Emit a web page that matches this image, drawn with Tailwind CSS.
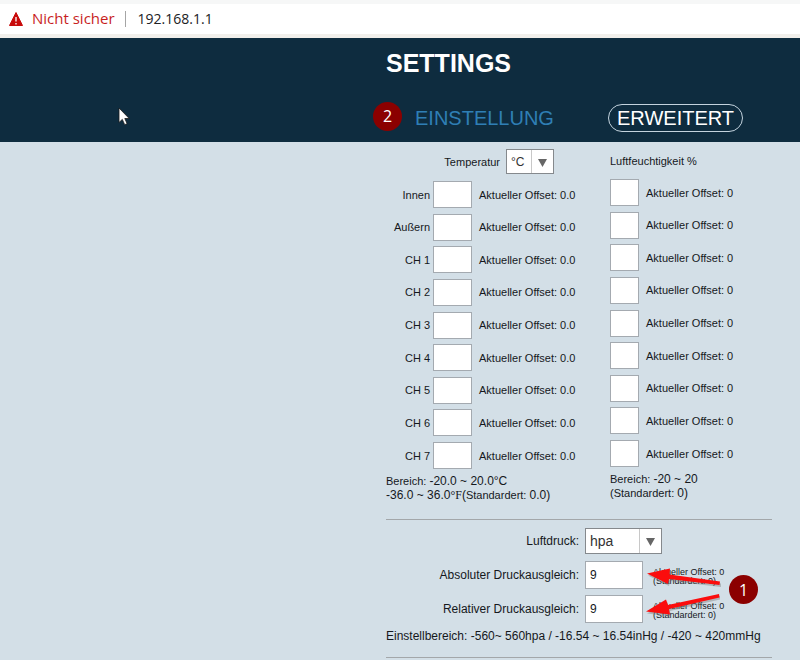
<!DOCTYPE html>
<html lang="de">
<head>
<meta charset="utf-8">
<meta name="viewport" content="width=device-width, initial-scale=1">
<title>Settings</title>
<script src="https://cdn.jsdelivr.net/npm/@tailwindcss/browser@4"></script>
</head>
<body class="relative min-h-screen overflow-x-hidden bg-[#d3dfe7] font-['Liberation_Sans',Arial,sans-serif] text-[11px] leading-[14px] text-[#15181c]">

<div class="flex h-[38px] items-center border-t-4 border-b-4 border-t-[#f6f7f7] border-b-[#f1efeb] bg-white pl-2 font-['Open_Sans','Noto_Sans',sans-serif] text-sm">
  <svg class="size-4" viewBox="0 0 16 16" aria-hidden="true"><path d="M8 1.500 14.500 14.500H1.500Z" fill="#c80a0a" stroke="#c80a0a" stroke-linejoin="round"/><path d="M8 6v4.500M8 12v1.500" stroke="#fff" stroke-width="1.3"/></svg>
  <span class="ml-2 text-[15px] text-[#c81e1e]">Nicht sicher</span>
  <span class="mr-3 ml-2.5 h-4 w-px bg-[#a5a5a5]"></span>
  <span class="text-[#202124]">192.168.1.1</span>
</div>

<header class="h-[104px] bg-[#0e2c3f] pt-2 pl-[386px]">
  <h1 class="text-[25px] leading-[34px] font-bold text-white">SETTINGS</h1>
  <nav class="relative mt-6 flex items-center text-xl leading-7">
    <span class="absolute -left-[13px] flex size-[29px] -translate-y-0.5 items-center justify-center rounded-full bg-[#8b0000] font-['Open_Sans',sans-serif] text-base text-white">2</span>
    <a href="#einstellung" class="ml-[29px] w-[193px] text-[#2f7fb5]">EINSTELLUNG</a>
    <a href="#erweitert" class="flex h-7 items-center rounded-full border border-[#c3d3de] px-2 text-white">ERWEITERT</a>
  </nav>
</header>

<main class="pr-7 pl-[386px]">
  <div class="flex">
    <section class="w-56 pt-[7px]">
      <div class="flex h-[25px] items-center">
        <label for="temp" class="w-[114px] text-right">Temperatur</label>
        <div class="relative ml-1.5 h-[25px] w-12">
          <select id="temp" class="block size-full appearance-none border border-[#85898d] bg-white pl-1 text-xs text-[#333]"><option>°C</option><option>°F</option></select>
          <span class="pointer-events-none absolute inset-y-px right-px flex w-[22px] items-center justify-center border-l border-[#c8c8c8] pt-0.5"><svg class="h-2 w-[9px]" viewBox="0 0 9 8"><path d="M0 0h9L4.500 8Z" fill="#666"/></svg></span>
        </div>
      </div>
      <div class="mt-[7px] flex h-[288px] flex-col justify-between">
        <div class="flex items-center"><label for="t1" class="w-11 text-right">Innen</label><input id="t1" class="mx-[3px] h-[27px] w-[39px] border border-[#a4aab0] bg-white px-1"><span class="ml-1">Aktueller Offset: 0.0</span></div>
        <div class="flex items-center"><label for="t2" class="w-11 text-right">Außern</label><input id="t2" class="mx-[3px] h-[27px] w-[39px] border border-[#a4aab0] bg-white px-1"><span class="ml-1">Aktueller Offset: 0.0</span></div>
        <div class="flex items-center"><label for="t3" class="w-11 text-right">CH 1</label><input id="t3" class="mx-[3px] h-[27px] w-[39px] border border-[#a4aab0] bg-white px-1"><span class="ml-1">Aktueller Offset: 0.0</span></div>
        <div class="flex items-center"><label for="t4" class="w-11 text-right">CH 2</label><input id="t4" class="mx-[3px] h-[27px] w-[39px] border border-[#a4aab0] bg-white px-1"><span class="ml-1">Aktueller Offset: 0.0</span></div>
        <div class="flex items-center"><label for="t5" class="w-11 text-right">CH 3</label><input id="t5" class="mx-[3px] h-[27px] w-[39px] border border-[#a4aab0] bg-white px-1"><span class="ml-1">Aktueller Offset: 0.0</span></div>
        <div class="flex items-center"><label for="t6" class="w-11 text-right">CH 4</label><input id="t6" class="mx-[3px] h-[27px] w-[39px] border border-[#a4aab0] bg-white px-1"><span class="ml-1">Aktueller Offset: 0.0</span></div>
        <div class="flex items-center"><label for="t7" class="w-11 text-right">CH 5</label><input id="t7" class="mx-[3px] h-[27px] w-[39px] border border-[#a4aab0] bg-white px-1"><span class="ml-1">Aktueller Offset: 0.0</span></div>
        <div class="flex items-center"><label for="t8" class="w-11 text-right">CH 6</label><input id="t8" class="mx-[3px] h-[27px] w-[39px] border border-[#a4aab0] bg-white px-1"><span class="ml-1">Aktueller Offset: 0.0</span></div>
        <div class="flex items-center"><label for="t9" class="w-11 text-right">CH 7</label><input id="t9" class="mx-[3px] h-[27px] w-[39px] border border-[#a4aab0] bg-white px-1"><span class="ml-1">Aktueller Offset: 0.0</span></div>
      </div>
      <p class="mt-[5px] whitespace-nowrap">Bereich: <span class="text-xs leading-[14px]">-20.0 ~ 20.0°C</span><br><span class="text-xs leading-[14px]">-36.0 ~ 36.0<span class="font-['Liberation_Serif',serif]">°F</span>(</span>Standardert: <span class="text-xs leading-[14px]">0.0)</span></p>
    </section>

    <section class="pt-1.5">
      <h2 class="leading-[26px]">Luftfeuchtigkeit %</h2>
      <div class="mt-[5px] flex h-[288px] flex-col justify-between">
        <div class="flex items-center gap-[7px]"><input id="h1" class="h-[27px] w-[29px] border border-[#a4aab0] bg-white px-1"><label for="h1">Aktueller Offset: 0</label></div>
        <div class="flex items-center gap-[7px]"><input id="h2" class="h-[27px] w-[29px] border border-[#a4aab0] bg-white px-1"><label for="h2">Aktueller Offset: 0</label></div>
        <div class="flex items-center gap-[7px]"><input id="h3" class="h-[27px] w-[29px] border border-[#a4aab0] bg-white px-1"><label for="h3">Aktueller Offset: 0</label></div>
        <div class="flex items-center gap-[7px]"><input id="h4" class="h-[27px] w-[29px] border border-[#a4aab0] bg-white px-1"><label for="h4">Aktueller Offset: 0</label></div>
        <div class="flex items-center gap-[7px]"><input id="h5" class="h-[27px] w-[29px] border border-[#a4aab0] bg-white px-1"><label for="h5">Aktueller Offset: 0</label></div>
        <div class="flex items-center gap-[7px]"><input id="h6" class="h-[27px] w-[29px] border border-[#a4aab0] bg-white px-1"><label for="h6">Aktueller Offset: 0</label></div>
        <div class="flex items-center gap-[7px]"><input id="h7" class="h-[27px] w-[29px] border border-[#a4aab0] bg-white px-1"><label for="h7">Aktueller Offset: 0</label></div>
        <div class="flex items-center gap-[7px]"><input id="h8" class="h-[27px] w-[29px] border border-[#a4aab0] bg-white px-1"><label for="h8">Aktueller Offset: 0</label></div>
        <div class="flex items-center gap-[7px]"><input id="h9" class="h-[27px] w-[29px] border border-[#a4aab0] bg-white px-1"><label for="h9">Aktueller Offset: 0</label></div>
      </div>
      <p class="mt-[5px]">Bereich: <span class="text-xs leading-[14px]">-20 ~ 20</span><br>(Standardert: <span class="text-xs leading-[14px]">0)</span></p>
    </section>
  </div>

  <section class="relative mt-[17px] border-y border-[#a3a7aa] pt-2 pb-[13px] text-xs">
    <div class="flex items-center">
      <label for="unit" class="w-[193px] text-right">Luftdruck:</label>
      <div class="relative ml-1.5 h-[26px] w-[77px]">
        <select id="unit" class="block size-full appearance-none border border-[#85898d] bg-white pl-1 text-sm text-[#333]"><option>hpa</option><option>inHg</option><option>mmHg</option></select>
        <span class="pointer-events-none absolute inset-y-px right-px flex w-[22px] items-center justify-center border-l border-[#c8c8c8] pt-0.5"><svg class="h-2 w-[9px]" viewBox="0 0 9 8"><path d="M0 0h9L4.500 8Z" fill="#666"/></svg></span>
      </div>
    </div>
    <div class="mt-[7px] flex items-center">
      <label for="abs" class="w-[193px] text-right">Absoluter Druckausgleich:</label>
      <input id="abs" value="9" class="ml-1.5 h-7 w-[58px] border border-[#a4aab0] bg-white px-1">
      <p class="ml-2.5 pt-1 text-[9px] leading-[9px]">Aktueller Offset: 0<br>(Standardert: 0)</p>
    </div>
    <div class="mt-1.5 flex items-center">
      <label for="rel" class="w-[193px] text-right">Relativer Druckausgleich:</label>
      <input id="rel" value="9" class="ml-1.5 h-7 w-[58px] border border-[#a4aab0] bg-white px-1">
      <p class="ml-2.5 pt-1 text-[9px] leading-[9px]">Aktueller Offset: 0<br>(Standardert: 0)</p>
    </div>
    <p class="mt-[5px] leading-4">Einstellbereich: -560~ 560hpa / -16.54 ~ 16.54inHg / -420 ~ 420mmHg</p>

    <svg class="pointer-events-none absolute top-[46px] left-[259px] h-[52px] w-20" viewBox="645 566 80 52" aria-hidden="true">
      <g fill="#777" opacity=".4" transform="translate(1 2)"><path d="M647 573.500 670 568.500 669.500 574.500 720 581.500V585L669 579 668 584Z"/><path d="M646 611.500 666 599.500 668 605 719 594V597.500L669 609 670 614.500Z"/></g>
      <g fill="#fb0d0d"><path d="M647 573.500 670 568.500 669.500 574.500 720 581.500 719.500 585 669 579 668 584Z"/><path d="M646 611.500 666 599.500 668 605 719 594 719.500 597.500 669 609 670 614.500Z"/></g>
    </svg>
    <span class="absolute top-[55px] left-[343px] flex size-[29px] items-center justify-center rounded-full bg-[#8b0000] font-['Open_Sans',sans-serif] text-base text-white">1</span>
  </section>
</main>

<svg class="pointer-events-none absolute top-[107px] left-[118px] h-[19px] w-3" viewBox="0 0 12 19" aria-hidden="true"><path d="M1 1v14.500l3.300-3.100 2.400 5.300 2.400-1-2.300-5.200h4.400Z" fill="#fff" stroke="#1a1a1a" stroke-width=".8"/></svg>
</body>
</html>
